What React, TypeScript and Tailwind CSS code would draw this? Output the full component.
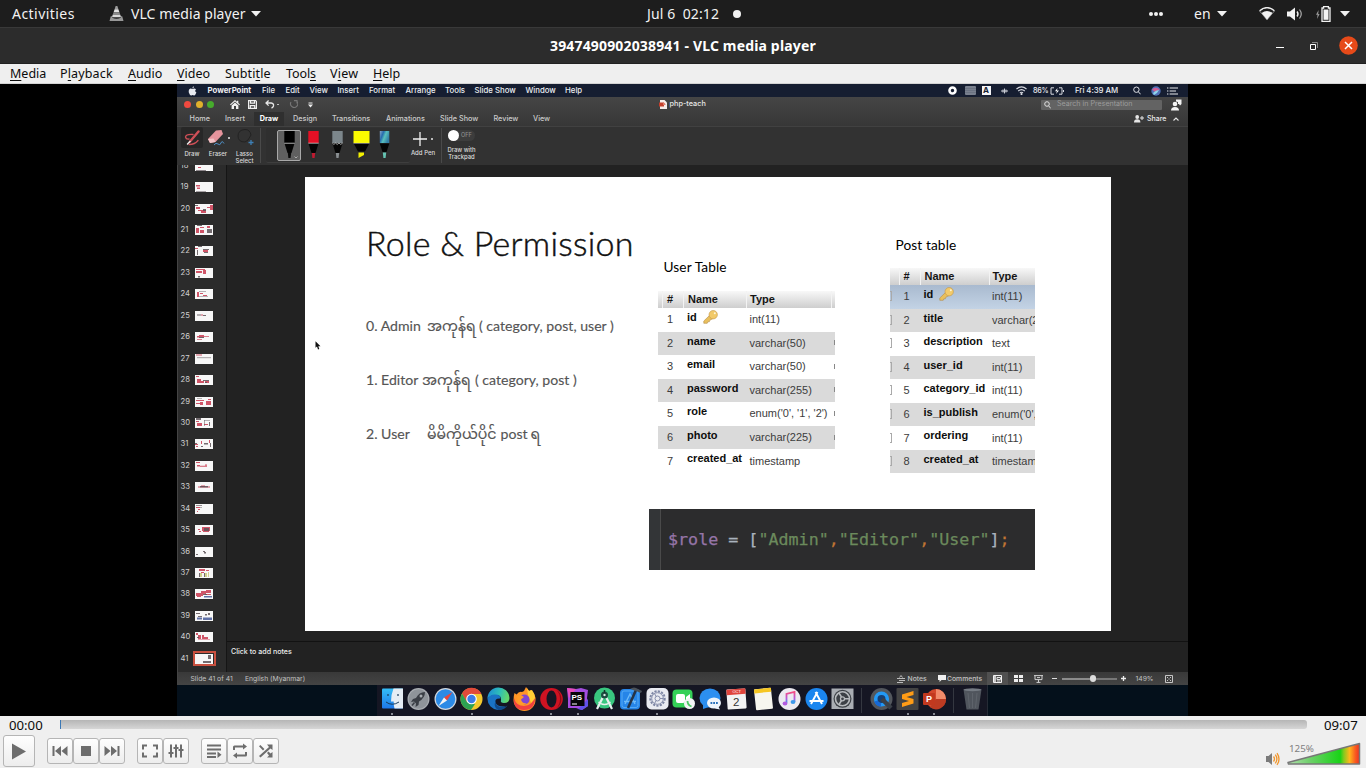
import React from "react";

type Kids = { children?: React.ReactNode };

const mono = "font-['DejaVu_Sans_Mono',monospace]";

function Caret({ className }: { className: string }) {
  return (
    <svg className={className} viewBox="0 0 10 6">
      <path d="M0 0h10L5 5.5z" fill="#f2f2f2" />
    </svg>
  );
}

function Slot({ w, children }: Kids & { w: string }) {
  return <div className={`${w} shrink-0 whitespace-nowrap flex items-center`}>{children}</div>;
}

/* ---------- desktop bar, title bar, menu ---------- */

function GnomeBar() {
  return (
    <div className="h-[28px] shrink-0 flex items-center bg-[#1d1d1d] border-b border-[#393939] text-[#f2f2f2] text-[14px] leading-[20px]">
      <Slot w="w-[109px] pl-[12px]"><span className="tracking-[0.45px]">Activities</span></Slot>
      <Slot w="w-[22px]">
        <svg className="w-[15px] h-[17px]" viewBox="0 0 15 17">
          <path d="M6.6 1h1.8l1 3.2H5.6z" fill="#9b9b9b" />
          <path d="M5.6 4.2h3.8l1 3H4.6z" fill="#e4e4e4" />
          <path d="M4.6 7.2h5.8l.9 2.5H3.7z" fill="#8b8b8b" />
          <path d="M3.7 9.7h7.6l.8 2.6H2.9z" fill="#dadada" />
          <path d="M1.8 11.3h1.5l-.3 1.5q4.500 2 9 0l-.3-1.500h1.500L14.500 16H.5z" fill="#989898" />
        </svg>
      </Slot>
      <Slot w="w-[120px]"><span className="tracking-[0.06px]">VLC media player</span></Slot>
      <Slot w="w-[396px]"><Caret className="w-[10px] h-[6px]" /></Slot>
      <Slot w="w-[86px]"><span className="whitespace-pre tracking-[0.1px]">Jul 6  02:12</span></Slot>
      <Slot w="w-[416px]"><i className="w-[8px] h-[8px] rounded-full bg-[#f2f2f2]" /></Slot>
      <Slot w="w-[45px] gap-[1px]">
        <i className="w-[4px] h-[4px] rounded-full bg-[#f2f2f2]" />
        <i className="w-[4px] h-[4px] rounded-full bg-[#f2f2f2]" />
        <i className="w-[4px] h-[4px] rounded-full bg-[#f2f2f2]" />
      </Slot>
      <Slot w="w-[23px]">en</Slot>
      <Slot w="w-[42px]"><Caret className="w-[10px] h-[6px]" /></Slot>
      <Slot w="w-[28px]">
        <svg className="w-[16px] h-[14px]" viewBox="0 0 16 14">
          <path d="M.6 4Q8-2.500 15.400 4L8 12.800z" fill="none" stroke="#8a8a8a" strokeWidth="1" />
          <path d="M.6 3.700Q8-2.500 15.400 3.700" fill="none" stroke="#eee" strokeWidth="1.300" />
          <path d="M2.600 6Q8 2 13.400 6L8 12.800z" fill="#f2f2f2" />
        </svg>
      </Slot>
      <Slot w="w-[29px]">
        <svg className="w-[16px] h-[14px]" viewBox="0 0 16 14" fill="none" stroke="#eee">
          <path d="M0 4.500h3L8 .5v13L3 9.500H0z" fill="#f2f2f2" stroke="none" />
          <path d="M10 4.500q2 2.500 0 5" strokeWidth="1.400" />
          <path d="M12.500 2.500q3.500 4.500 0 9" stroke="#aaa" strokeWidth="1.200" />
        </svg>
      </Slot>
      <Slot w="w-[24px]">
        <svg className="w-[15px] h-[16px]" viewBox="0 0 15 16">
          <path d="M2.600 4L0 8.800h1.600L1 13l2.600-5H2.200z" fill="#9a9a9a" />
          <path d="M7.600.600h4.800v1.400h1.600v13.300H6V2h1.600z" fill="none" stroke="#f2f2f2" strokeWidth="1.300" />
          <rect x="7.500" y="3.500" width="5" height="10.300" fill="#f2f2f2" />
        </svg>
      </Slot>
      <Caret className="w-[10px] h-[6px]" />
    </div>
  );
}

function TitleBar() {
  return (
    <div className="h-[36px] shrink-0 flex items-center bg-[#2c2c2c] border-b border-[#212121]">
      <div className="w-[550px]" />
      <Slot w="w-[726px]">
        <span className="text-white font-bold text-[14px] tracking-[0.16px] leading-[18px]">3947490902038941 - VLC media player</span>
      </Slot>
      <Slot w="w-[34px]"><i className="w-[8px] h-px bg-white mt-[4px]" /></Slot>
      <Slot w="w-[29px]">
        <svg className="w-[8px] h-[8px]" viewBox="0 0 8 8" fill="none">
          <path d="M2 .5h5.500V6" stroke="#888" />
          <path d="M.5 2.500h5v5h-5z" stroke="#fff" />
        </svg>
      </Slot>
      <svg className="w-[19px] h-[19px] -mt-[1px]" viewBox="0 0 19 19">
        <circle cx="9.500" cy="9.500" r="9.300" fill="#e64a19" />
        <path d="M6 6l7 7M13 6l-7 7" stroke="#fff" strokeWidth="1.500" />
      </svg>
    </div>
  );
}

const vlcMenu: [string, string, string, string][] = [
  ["w-[50px]", "", "M", "edia"],
  ["w-[68px] tracking-[0.15px]", "P", "l", "ayback"],
  ["w-[49px]", "", "A", "udio"],
  ["w-[48px]", "", "V", "ideo"],
  ["w-[61px] tracking-[0.1px]", "Subti", "t", "le"],
  ["w-[44px] -tracking-[0.1px]", "Tool", "s", ""],
  ["w-[43px] tracking-[0.2px]", "V", "i", "ew"],
  ["w-[40px]", "", "H", "elp"],
];

function VlcMenu() {
  return (
    <div className="h-[20px] shrink-0 flex items-center pl-[10px] bg-[#efefef] border-b border-[#d3d3d3] text-[#0b0b0b] text-[12.5px] leading-[18px]">
      {vlcMenu.map(([w, a, u, b]) => (
        <Slot key={a + u + b} w={w}>
          <span>{a}<span className="underline underline-offset-[2px] decoration-1">{u}</span>{b}</span>
        </Slot>
      ))}
    </div>
  );
}

/* ---------- macOS menu bar and PowerPoint chrome ---------- */

const macMenu: [string, string][] = [
  ["w-[54.500px] font-bold", "PowerPoint"],
  ["w-[23.500px]", "File"],
  ["w-[24px]", "Edit"],
  ["w-[28px]", "View"],
  ["w-[31.500px]", "Insert"],
  ["w-[36.500px]", "Format"],
  ["w-[39.500px]", "Arrange"],
  ["w-[29.500px]", "Tools"],
  ["w-[51px]", "Slide Show"],
  ["w-[39.500px]", "Window"],
  ["w-[382.500px]", "Help"],
];

function MacMenuBar() {
  return (
    <div className="h-[13px] shrink-0 flex items-center bg-[#161e31] text-[#eceef2] text-[7.8px] leading-[13px] font-medium">
      <Slot w="w-[30.500px] pl-[11px]">
        <svg className="w-[9px] h-[10px]" viewBox="0 0 9 10" fill="#e8eaf0">
          <path d="M6 .2Q4.200.6 4.400 2.400 6 2.200 6 .2zM4.500 2.900Q6.800 1.800 8 3.400 6.200 4.600 8.400 6.600 7.200 9.700 6 9.400 4.600 8.800 3.300 9.400 1.800 9.600.8 6.500.3 3.200 2.600 2.600z" />
        </svg>
      </Slot>
      {macMenu.map(([w, t]) => <Slot key={t} w={w}>{t}</Slot>)}
      <Slot w="w-[17px]">
        <svg className="w-[9px] h-[9px]" viewBox="0 0 9 9"><circle cx="4.500" cy="4.500" r="3" fill="none" stroke="#fff" strokeWidth="2.600" /></svg>
      </Slot>
      <Slot w="w-[17px]">
        <svg className="w-[11px] h-[9px]" viewBox="0 0 11 9"><rect width="11" height="9" rx="1" fill="#79808e" /><path d="M0 2.500h11M0 4.500h11M0 6.500h11" stroke="#626a7a" strokeWidth=".6" /></svg>
      </Slot>
      <Slot w="w-[19px]">
        <span className="w-[9px] h-[9px] bg-[#f4f4f6] text-[#161e31] font-bold text-[8px] leading-[9px] text-center">A</span>
      </Slot>
      <Slot w="w-[15px]">
        <svg className="w-[7px] h-[8px]" viewBox="0 0 7 8" stroke="#c9ccd4" strokeWidth="1"><path d="M0 4h7M2 2.500v3M5 2.500v3M3.500 1.500v5" /></svg>
      </Slot>
      <Slot w="w-[17.500px]">
        <svg className="w-[11px] h-[9px]" viewBox="0 0 11 9" fill="none" stroke="#d9dbe2" strokeWidth="1.100">
          <path d="M.5 3Q5.500-1.200 10.500 3M2.200 5Q5.500 2.200 8.800 5M3.900 6.900Q5.500 5.500 7.100 6.900" /><circle cx="5.500" cy="8" r=".5" />
        </svg>
      </Slot>
      <Slot w="w-[17px]"><span className="text-[7.2px] tracking-[-0.3px]">86%</span></Slot>
      <Slot w="w-[25px]">
        <svg className="w-[14px] h-[8px]" viewBox="0 0 14 8" fill="none" stroke="#d9dbe2"><path d="M4 .8H1v6.400h3M9 .8h3v6.400H9M13.500 3v2" /><path d="M7.500 1L5 4.300h2L6 7l3-3.600H7z" fill="#fff" stroke="none" /></svg>
      </Slot>
      <Slot w="w-[58px]"><span className="tracking-[-0.05px]">Fri 4:39 AM</span></Slot>
      <Slot w="w-[17.500px]">
        <svg className="w-[8px] h-[9px]" viewBox="0 0 8 9" fill="none" stroke="#dfe1e6"><circle cx="3.400" cy="3.700" r="2.700" /><path d="M5.400 5.800l2.200 2.500" /></svg>
      </Slot>
      <Slot w="w-[16px]">
        <svg className="w-[10px] h-[10px]" viewBox="0 0 10 10"><circle cx="5" cy="5" r="4.700" fill="#5271b8" /><path d="M1 3.500Q5 0 9 4 6 4 4 6z" fill="#cf5e96" /><path d="M2 7q3-3 6-3-2 4-5 5z" fill="#8fd6ea" /></svg>
      </Slot>
      <svg className="w-[11px] h-[8px]" viewBox="0 0 11 8" stroke="#e8e9ee" strokeWidth="1.200"><path d="M0 1h1.400M2.600 1H11M0 4h1.400M2.600 4H9M0 7h1.400M2.600 7H11" /></svg>
    </div>
  );
}

function WindowTitle() {
  return (
    <div className="h-[15px] flex items-center text-[#e6e6e6]">
      <Slot w="w-[53px] pl-[7px] gap-[4.500px]">
        <i className="w-[7px] h-[7px] rounded-full bg-[#f0493f]" />
        <i className="w-[7px] h-[7px] rounded-full bg-[#e0b02c]" />
        <i className="w-[7px] h-[7px] rounded-full bg-[#46ab2c]" />
      </Slot>
      <Slot w="w-[18px]">
        <svg className="w-[10px] h-[9px]" viewBox="0 0 10 9" fill="#f0f0f0"><path d="M5 0L0 4.500l.8.8L5 1.600l4.200 3.700.8-.8-1.700-1.500V.8H7v1z" /><path d="M1.600 5.400L5 2.400l3.400 3V9H6V6H4v3H1.600z" /></svg>
      </Slot>
      <Slot w="w-[17px]">
        <svg className="w-[9px] h-[9px]" viewBox="0 0 9 9" fill="none" stroke="#f0f0f0" strokeWidth="1.200"><path d="M.6.600h7l.8.8v7H.6zM2.500.600v2.600h4V.600M2.300 8.400V5.600h4.400v2.800" /></svg>
      </Slot>
      <Slot w="w-[12px]">
        <svg className="w-[10px] h-[9px]" viewBox="0 0 10 9" fill="none" stroke="#e8e8e8" strokeWidth="1.300"><path d="M3.600.500L1 3l2.600 2.600M1.200 3h5Q9 3.500 8.500 6 8 7.500 6.500 8.200" /></svg>
      </Slot>
      <Slot w="w-[12px]"><i className="w-[2px] h-[1.500px] bg-[#bbb]" /></Slot>
      <Slot w="w-[19px]">
        <svg className="w-[9px] h-[9px]" viewBox="0 0 9 9" fill="none" stroke="#777" strokeWidth="1.100"><path d="M5 .6h3v3M7.700 1.200A3.600 3.600 0 1 1 2 2" /></svg>
      </Slot>
      <Slot w="w-[350.500px]">
        <svg className="w-[5px] h-[6px]" viewBox="0 0 5 6" fill="#eee"><path d="M.5.500h4v1h-4zM0 2.500h5L2.500 5.500z" /></svg>
      </Slot>
      <Slot w="w-[11px]">
        <svg className="w-[8px] h-[9px]" viewBox="0 0 8 9"><path d="M1 0h4.500L8 2.500V9H1z" fill="#f5ecea" /><path d="M0 2.500h5v4H0z" fill="#c5402d" /><path d="M4 2.500a2.500 2.500 0 0 1 2.500 2.500H4z" fill="#e07b69" /></svg>
      </Slot>
      <Slot w="w-[371.500px]"><span className="text-[7.300px] font-medium">php-teach</span></Slot>
      <div className="w-[120.500px] h-[10px] shrink-0 rounded-[1px] bg-[#636363] flex items-center pl-[3px] gap-[6px] whitespace-nowrap">
        <svg className="w-[7px] h-[8px]" viewBox="0 0 7 8" fill="none" stroke="#e0e0e0"><circle cx="3" cy="3" r="2.300" /><path d="M4.700 4.900L6.700 7.400" /></svg>
        <span className="text-[7.100px] text-[#9c9c9c]">Search in Presentation</span>
      </div>
      <svg className="w-[11px] h-[12px] ml-[9px]" viewBox="0 0 11 12" fill="#f4f4f4"><circle cx="4" cy="5" r="2.300" /><path d="M0 11.500q0-3.500 4-3.500t4 3.500zM5 .5h5.500V5L9 6.500 8 5H7V3L5 2.500z" /></svg>
    </div>
  );
}

const tabsAfter: [string, string][] = [
  ["w-[39px]", "Design"],
  ["w-[54px]", "Transitions"],
  ["w-[54px]", "Animations"],
  ["w-[53.500px]", "Slide Show"],
  ["w-[39.500px]", "Review"],
  ["w-[601px]", "View"],
];

function Tabs() {
  return (
    <div className="h-[14px] flex items-center text-[#cbcbcb] text-[7.250px] leading-[14px] font-medium">
      <Slot w="w-[48px] pl-[12.500px]">Home</Slot>
      <Slot w="w-[29px]">Insert</Slot>
      <div className="w-[30px] h-full mr-[9px] shrink-0 bg-[#2f2f2f] text-white font-bold flex items-center justify-center">Draw</div>
      {tabsAfter.map(([w, t]) => <Slot key={t} w={w}>{t}</Slot>)}
      <Slot w="w-[13px]">
        <svg className="w-[10px] h-[8px]" viewBox="0 0 10 8" fill="#e6e6e6"><circle cx="3.200" cy="2" r="1.900" /><path d="M0 7.500Q0 4.300 3.200 4.300T6.400 7.500zM7.500 1h1v1.500H10v1H8.500V5h-1V3.500H6v-1h1.500z" /></svg>
      </Slot>
      <Slot w="w-[26px]"><span className="text-[7px] text-[#ececec]">Share</span></Slot>
      <svg className="w-[6px] h-[4px]" viewBox="0 0 6 4" fill="none" stroke="#e6e6e6" strokeWidth="1.100"><path d="M.5 3.500L3 1l2.500 2.500" /></svg>
    </div>
  );
}

function Pen({ cap, tip, wide, zig }: { cap: string; tip: string; wide?: boolean; zig?: boolean }) {
  return wide ? (
    <svg className="w-[17px] h-[28px]" viewBox="0 0 17 28">
      <path d="M.5 0h16v12H.5z" fill={cap} /><path d="M.8 12.500h15.400l-4.200 8H5z" fill="#050505" /><path d="M5.500 21.500H11V24l-5.500 3z" fill={tip} /><path d="M.5 12.300h16" stroke="#ddd" strokeWidth=".5" />
    </svg>
  ) : (
    <svg className="w-[11px] h-[28px]" viewBox="0 0 11 28">
      <path d="M.3 0h10.400v12H.3z" fill={cap} /><path d="M.5 12.500h10L7.500 22h-4z" fill="#050505" /><path d="M3.800 22h3.400l-.6 5H4.400z" fill={tip} />
      <path d={zig ? "M.3 12l1.600 1.500L3.500 12l1.700 1.500L7 12l1.700 1.500L10.700 12" : "M.3 12.200h10.400"} stroke="#d8d8d8" strokeWidth=".7" fill="none" />
    </svg>
  );
}

function Ribbon() {
  return (
    <div className="h-[39px] shrink-0 flex bg-[#323232] border-t border-[#414141] text-[#dcdcdc] text-[6px] leading-[7px] font-medium">
      <div className="w-[22px] ml-[4px] flex flex-col items-center shrink-0">
        <div className="w-[22px] h-[21px] rounded-[2px] bg-[#272727] flex items-center justify-center">
          <svg className="w-[17px] h-[16px]" viewBox="0 0 17 16" fill="none" stroke="#cf4f57" strokeLinecap="round"><path d="M14.500 1.500L6 11.500" strokeWidth="2.400" /><path d="M6 11.500L3.500 14" stroke="#eee" strokeWidth="1.400" /><path d="M9 4.500Q2 4 1.500 7 2 9.500 5 9M5 14.500q6 0 9-4" strokeWidth="1.300" /></svg>
        </div>
        <span className="mt-[1.500px]">Draw</span>
      </div>
      <div className="w-[27px] ml-[1.500px] mt-[1px] flex flex-col items-center shrink-0">
        <div className="flex items-center gap-[2px] h-[20px]">
          <svg className="w-[19px] h-[18px]" viewBox="0 0 19 18"><path d="M9 1.500L14.500 1l1.500 4L8.500 13 3 14l-2-4z" fill="#e6949c" /><path d="M1 10l5.500-.500L8.500 13 3 14z" fill="#f3c4c6" /><path d="M7 16q2-3 4-1t3-1 3 .500" stroke="#4f8fc5" fill="none" /></svg>
          <i className="w-[2px] h-[2px] bg-[#bbb]" />
        </div>
        <span className="mt-[1.500px]">Eraser</span>
      </div>
      <div className="w-[24px] ml-[1px] mr-[1px] mt-[1px] flex flex-col items-center text-center shrink-0">
        <svg className="w-[18px] h-[20px] shrink-0" viewBox="0 0 18 20" fill="none"><path d="M9 1.500Q2 2 2 8t7 6l3-2 3-5Q14 1.500 9 1.500z" stroke="#222" strokeWidth="1" /><path d="M15 12v5M12.500 14.500h5" stroke="#3d7fb5" strokeWidth="1.300" /></svg>
        <span className="mt-[1.500px]">Lasso Select</span>
      </div>
      <i className="w-px h-[35px] ml-[2.500px] mt-[1px] bg-[#4a4a4a] shrink-0" />
      <div className="w-[144px] h-[35px] ml-[5px] mt-[1px] rounded-[2px] bg-[#2f2f2f] border-b border-[#3e3e3e] flex items-start shrink-0">
        <div className="w-[24px] h-[31px] ml-[11px] mt-[2px] rounded-[2px] bg-[#606060] border border-[#a9a9a9] flex justify-center shrink-0 relative">
          <Pen cap="#000" tip="#0a0a0a" />
          <svg className="absolute right-[2px] bottom-[1px] w-[4px] h-[3px]" viewBox="0 0 4 3"><path d="M.5.500L2 2 3.500.500" stroke="#ccc" strokeWidth=".7" fill="none" /></svg>
        </div>
        <div className="flex pt-[3px] pl-[6.500px]">
          <Slot w="w-[24px]"><Pen cap="#e51025" tip="#c01a30" /></Slot>
          <Slot w="w-[21px]"><Pen cap="#7c868b" tip="#8a8f92" zig /></Slot>
          <Slot w="w-[26px]"><Pen cap="#fbfb00" tip="#f3f000" wide /></Slot>
          <Slot w="w-[12px]">
            <svg className="w-[11px] h-[28px]" viewBox="0 0 11 28">
              <defs><linearGradient id="galaxy" x1="0" x2="1" y2=".5"><stop offset="0" stopColor="#8ea7c9" /><stop offset=".35" stopColor="#266cae" /><stop offset=".6" stopColor="#59c0bd" /><stop offset="1" stopColor="#327fa6" /></linearGradient></defs>
              <path d="M.8 0h9.500v12H.8z" fill="url(#galaxy)" /><path d="M.8 12.500h9.500L7.500 21h-4z" fill="#050505" /><path d="M3.800 21.500h3.400l-.6 5.500H4.400z" fill="#66c4b3" />
            </svg>
          </Slot>
        </div>
      </div>
      <div className="w-[26px] ml-[0px] mr-[1px] mt-[3px] flex flex-col items-center shrink-0">
        <div className="flex items-center gap-[4px] h-[17px]">
          <svg className="w-[14px] h-[14px]" viewBox="0 0 14 14"><path d="M7 0v14M0 7h14" stroke="#f2f2f2" strokeWidth="1.300" /></svg>
          <i className="w-[2px] h-[2px] bg-[#bbb]" />
        </div>
        <span className="mt-[2px] whitespace-nowrap text-[6px]">Add Pen</span>
      </div>
      <i className="w-px h-[35px] ml-[4px] mt-[1px] bg-[#4a4a4a] shrink-0" />
      <div className="ml-[6px] mt-[3px] w-[27px] flex flex-col items-center text-center text-[5.900px] shrink-0">
        <div className="w-[27px] h-[11px] rounded-full bg-[#3d3d3d] flex items-center gap-[2px] shrink-0">
          <i className="w-[11px] h-[11px] rounded-full bg-white" />
          <span className="text-[5.500px] text-[#8e8e8e]">OFF</span>
        </div>
        <span className="mt-[5px] whitespace-nowrap">Draw with<br />Trackpad</span>
      </div>
    </div>
  );
}

/* ---------- slide thumbnails ---------- */

const thumbs: { n: number; r: string; d?: string; b?: string; y?: string }[] = [
  { n: 18, r: "M1 1h5v1H1zM1 3h3v1H1zM3 6h3v1H3z", d: "M1 9h10v.8H1z" },
  { n: 19, r: "M1 3h4v1.500H1zM2 5.500h3V7H2z", d: "M1 9h10v.6H1z" },
  { n: 20, r: "M1 3h4v2H1zM6 6h5v3H6zM12 3h3v1h-3zM15 1h3v5h-3zM3 6h3v1H3z", d: "M0 1h3v1H0zM8 5h3v2H8z" },
  { n: 21, r: "M1 3h3v5H1zM5 5h4v3H5zM12 1h3v2h-3zM5 2h4v1H5z", d: "M12 4h5v4h-5zM2 0h5v1H2z" },
  { n: 22, r: "M0 2h3v1H0zM8 4h5v2H8z", d: "M3 0h4v1H3zM8 3h6v1H8zM2 4h1v5H2zM9 6h4v1H9z" },
  { n: 23, r: "M1 1h9v1H1zM1 3h6v2H1zM8 2h3v4H8z", d: "M3 8h2v1.500H3z" },
  { n: 24, r: "M2 3h2v5H2zM5 4h3v1H5zM8 6h4v1H8z", d: "M4 2h7v.6H4zM4 7h9v.6H4z" },
  { n: 25, r: "M6 3.500h2v1H6z", d: "M2 3.500h4v1H2zM8 4h3v1H8z" },
  { n: 26, r: "M2 4h7v1.500H2zM4 3h5v1H4zM2 7h5v.8H2zM9 4h5v.8H9z", d: "M4 5h5v1H4z" },
  { n: 27, r: "M1 .500h6v1H1z", d: "M2 3.500h14v.6H2z" },
  { n: 28, r: "M2 4h4v4H2zM6 6h3v2H6zM1 1h3v1H1zM10 6h4v2h-4z", d: "M8 5h6v1H8zM10 7h2v1h-2z" },
  { n: 29, r: "M1 3h8v1H1zM1 6h4v1H1zM5 5h3v3H5zM11 4h5v4h-5zM13 2h3v1h-3z", d: "M2 1h5v.5H2z" },
  { n: 30, r: "M1 3h3v1H1zM2 5h5v3H2zM9 6h4v1H9z", d: "M1 0h5v2H1zM9 2h6v.6H9zM9 2h.6v6H9zM14 4h1v4h-1z" },
  { n: 31, r: "M0 5h3v1H0zM6 2h1v3H6zM14 1h1v3h-1zM1 7h2v1H1z", d: "M0 4h2v1H0zM9 4h4v1.500H9zM6 7h2v1H6zM15 4h1v4h-1z" },
  { n: 32, r: "M1 1h4v1H1zM2 4h3v1.500H2zM5 4.800h7v1H5zM10 3.500h2v1h-2z" },
  { n: 33, r: "M3 4.500h12v1H3zM6 3.500h4v1H6z", d: "M5 4h8v1.400H5z" },
  { n: 34, r: "M1 3h4v1H1zM3 5h2v1H3zM2 7h1v1H2z", d: "M1 1h6v.8H1zM5 3h2v.6H5z" },
  { n: 35, r: "M3 4h2v1H3zM4 6h2v1H4zM7 2h8v4H7zM8 6h6v1H8z", d: "M9 3h5v3H9z" },
  { n: 36, r: "", d: "M8 4h2v1H8zM9 5h2v1.500H9zM1 7h2v1H1z" },
  { n: 37, r: "M4 1h6v2H4zM11 2h3v1h-3zM6 4h3v1H6z", d: "M4 5h1v4H4zM9 5h1v4H9z", y: "M5 5h2v4H5zM10 5h2v4h-2zM13 4h1v5h-1z" },
  { n: 38, r: "M1 4h7v3H1zM6 2h5v3H6zM11 1h5v3h-5zM2 7h4v1H2zM10 5h6v1h-6z", d: "M8 5h4v1H8z", b: "M9 7h8v1.500H9z" },
  { n: 39, r: "", d: "M1 2h4v1H1zM10 3h2v1.500h-2zM13 2h2v2h-2zM3 5h4v1H3z", b: "M2 6.500h5v2H2zM8 6.500h9V9H8z" },
  { n: 40, r: "M1 1h2v2H1zM3 3h3v4H3zM7 3h2v4H7zM9 5h4v2H9zM3 7.500h12v.6H3z", d: "M2 5h2v1H2z" },
  { n: 41, r: "", d: "M8 7h8v2H8zM13 1h3v4h-3z" },
];

function Thumbs() {
  return (
    <div className="w-[50px] shrink-0 overflow-hidden bg-[#2b2b2b] border-r border-[#151515] border-l border-l-[#444]">
      <div className="flex flex-col -mt-[10px]">
        {thumbs.map((t) => (
          <div key={t.n} className="h-[21.450px] shrink-0 flex items-center">
            <span className="w-[14.500px] pl-[2.500px] text-[7.700px] leading-[10px] text-[#cfcfcf]">{t.n}</span>
            <div className={t.n === 41 ? "w-[23px] h-[15px] border-2 border-[#c9503f] flex items-center justify-center" : "w-[20px] h-[12px] ml-[1.500px] flex items-center justify-center"}>
              <svg className="w-[18px] h-[10px] shrink-0" viewBox="0 0 18 10">
                <rect width="18" height="10" fill="#f7f7f7" />
                <path d={t.r} fill="#cf5568" />
                {t.d && <path d={t.d} fill="#5d5358" opacity=".85" />}
                {t.b && <path d={t.b} fill="#6172a8" />}
                {t.y && <path d={t.y} fill="#cfd08c" />}
              </svg>
            </div>
          </div>
        ))}
      </div>
    </div>
  );
}

/* ---------- slide ---------- */

const userRows: [string, string][] = [
  ["id", "int(11)"],
  ["name", "varchar(50)"],
  ["email", "varchar(50)"],
  ["password", "varchar(255)"],
  ["role", "enum('0', '1', '2')"],
  ["photo", "varchar(225)"],
  ["created_at", "timestamp"],
];

const postRows: [string, string][] = [
  ["id", "int(11)"],
  ["title", "varchar(255)"],
  ["description", "text"],
  ["user_id", "int(11)"],
  ["category_id", "int(11)"],
  ["is_publish", "enum('0', '1')"],
  ["ordering", "int(11)"],
  ["created_at", "timestamp"],
];

function Key() {
  return (
    <svg className="w-[15px] h-[14px] ml-[6px]" viewBox="0 0 15 14">
      <path d="M7 5L.8 11v2.300h3.400l.6-1.500h1.500l.5-1.500L10 8.500z" fill="#e9bf5c" stroke="#b58d48" strokeWidth=".6" />
      <circle cx="10.200" cy="4.700" r="4.200" fill="#f2ca6a" stroke="#c3954a" strokeWidth=".6" />
      <circle cx="11.800" cy="3.200" r="1" fill="#fff5d8" />
    </svg>
  );
}

function DbTable({ rows, post }: { rows: [string, string][]; post?: boolean }) {
  const first = post ? "w-[9.500px]" : "w-[5px]";
  return (
    <div className={`${post ? "w-[145px]" : "w-[177px]"} overflow-hidden font-['Liberation_Sans',sans-serif] text-[11px] leading-[14px] text-[#3c3c3c] whitespace-nowrap`}>
      <div className="h-[17px] flex items-stretch bg-linear-to-b from-[#f8f8f8] to-[#cecece] text-[#151515] font-bold">
        <div className={`${first} shrink-0 border-r border-[#f3f3f3]`} />
        <div className="w-[21px] shrink-0 border-r border-[#f3f3f3] pl-[4px] pt-[1px]">#</div>
        <div className={`${post ? "w-[69px]" : "w-[63px]"} shrink-0 border-r border-[#f3f3f3] pl-[4px] pt-[1px]`}>Name</div>
        <div className={`${post ? "w-[60px]" : "w-[85px]"} shrink-0 border-r border-[#f3f3f3] pl-[3px] pt-[1px]`}>Type</div>
      </div>
      {rows.map(([name, type], i) => (
        <div
          key={name}
          className={`h-[23.550px] pb-[1px] flex items-center ${i === 0 && post ? "bg-linear-to-b from-[#a9bacf] to-[#c3d3e5]" : i % 2 ? "bg-[#dadada]" : "bg-white"}`}
        >
          <div className={`${first} shrink-0`}>
            {post && <i className="block w-[1.500px] h-[10px] border-y border-r border-[#aaa]" />}
          </div>
          <div className="w-[24px] shrink-0 pl-[4px]">{i + 1}</div>
          <div className={`${post ? "w-[68.500px]" : "w-[62.500px]"} shrink-0 flex items-center h-[14px] -mt-[4.500px] font-bold text-[#0d0d0d]`}>
            {name}
            {name === "id" && <Key />}
          </div>
          <div className={post ? "" : "w-[84.500px]"}>{type}</div>
          {!post && i > 0 && i < 6 && <i className="w-px h-[5px] bg-[#888]" />}
        </div>
      ))}
    </div>
  );
}

function CodeBlock() {
  return (
    <div className={`w-[386px] h-[61px] bg-[#2c2c2d] flex items-center ${mono} text-[16.700px] leading-[20px] whitespace-pre [-webkit-text-stroke:0.25px]`}>
      <div className="w-[12px] h-full bg-[#333537] border-r border-[#4a4a4a] shrink-0" />
      <div className="pl-[7px]">
        <span className="text-[#9675a8]">$role</span>
        <span className="text-[#a9b3bd]"> = [</span>
        <span className="text-[#6b8a5c]">"Admin"</span><span className="text-[#c07634]">,</span>
        <span className="text-[#6b8a5c]">"Editor"</span><span className="text-[#c07634]">,</span>
        <span className="text-[#6b8a5c]">"User"</span>
        <span className="text-[#a9b3bd]">]</span><span className="text-[#c07634]">;</span>
      </div>
    </div>
  );
}

const burmese = "font-['Noto_Sans_Myanmar','Padauk','Lato',sans-serif] mt-[1.500px]";

function Slide() {
  return (
    <div className="relative w-[806px] h-[454px] bg-white font-['Lato',sans-serif] whitespace-nowrap">
      <div className="absolute left-[61px] top-[44px] text-[34px] leading-[44px] tracking-[0.25px] font-light text-[#111] [-webkit-text-stroke:0.45px]">Role &amp; Permission</div>
      <div className="absolute left-[61px] top-[139px] text-[14.100px] leading-[20px] text-[#555] [-webkit-text-stroke:0.15px] flex">
        <span className="w-[61px]">0. Admin</span>
        <span className={`w-[52px] ${burmese}`}>အကုန်ရ</span>
        <span>( category, post, user )</span>
      </div>
      <div className="absolute left-[61px] top-[193px] text-[14.100px] leading-[20px] text-[#555] [-webkit-text-stroke:0.15px] flex">
        <span className="w-[56px]">1. Editor</span>
        <span className={`w-[53px] ${burmese}`}>အကုန်ရ</span>
        <span>( category, post )</span>
      </div>
      <div className="absolute left-[61px] top-[247px] text-[14.100px] leading-[20px] text-[#555] [-webkit-text-stroke:0.15px] flex">
        <span className="w-[61px]">2. User</span>
        <span className={`w-[73.500px] ${burmese}`}>မိမိကိုယ်ပိုင်</span>
        <span className="w-[30px]">post</span>
        <span className={burmese}>ရ</span>
      </div>
      <div className="absolute left-[358.500px] top-[80px] text-[13.700px] leading-[20px] tracking-[0.1px] text-black">User Table</div>
      <div className="absolute left-[590.500px] top-[58px] text-[13.700px] leading-[20px] tracking-[0.1px] text-black">Post table</div>
      <div className="absolute left-[353px] top-[114px]"><DbTable rows={userRows} /></div>
      <div className="absolute left-[585px] top-[91px]"><DbTable rows={postRows} post /></div>
      <div className="absolute left-[344px] top-[331.500px]"><CodeBlock /></div>
      <svg className="absolute left-[10px] top-[164px] w-[6px] h-[9px]" viewBox="0 0 6 9"><path d="M.5.300v6.500l1.500-1.200 1 2.800 1.300-.500-1-2.700h2.200z" fill="#111" /></svg>
    </div>
  );
}

function StatusBar() {
  return (
    <div className="h-[13px] shrink-0 flex items-center bg-linear-to-b from-[#393939] to-[#444] border-l border-[#444] text-[#c2c2c2] text-[6.800px] leading-[12px]">
      <Slot w="w-[54px] pl-[12.500px]">Slide 41 of 41</Slot>
      <Slot w="w-[665px] pl-[13px]">English (Myanmar)</Slot>
      <Slot w="w-[10.500px]">
        <svg className="w-[8px] h-[8px]" viewBox="0 0 8 8" stroke="#bbb"><path d="M2.500 2.500L4 .500l1.500 2M0 3.500h8M2 5.500h6M0 7.500h6" fill="none" /></svg>
      </Slot>
      <Slot w="w-[30px]"><span className="font-medium">Notes</span></Slot>
      <Slot w="w-[9.500px]">
        <svg className="w-[8px] h-[7px]" viewBox="0 0 8 7" fill="#f0f0f0"><path d="M0 0h8v5H3.500L1.500 7V5H0z" /></svg>
      </Slot>
      <Slot w="w-[40px]"><span className="font-medium">Comments</span></Slot>
      <div className="w-[21px] h-full shrink-0 bg-[#505050] flex items-center justify-center">
        <svg className="w-[9px] h-[8px]" viewBox="0 0 9 8" fill="none" stroke="#f2f2f2"><path d="M.5.500h8v7h-8z" /><path d="M2 0v8" strokeWidth="1.500" /><path d="M4 2.500h3.500v2H4zM4 6h3.500" strokeWidth=".9" /></svg>
      </div>
      <Slot w="w-[20px] justify-center">
        <svg className="w-[9px] h-[7px]" viewBox="0 0 9 7" fill="#eee"><path d="M0 0h4v3H0zM5 0h4v3H5zM0 4h4v3H0zM5 4h4v3H5z" /></svg>
      </Slot>
      <Slot w="w-[20px] justify-center">
        <svg className="w-[9px] h-[8px]" viewBox="0 0 9 8" fill="none" stroke="#d0d0d0"><path d="M0 .600h9M1 .600v4h7v-4M4.500 4.600v2.800M2.500 7.400h4M3 2.600h3" /></svg>
      </Slot>
      <Slot w="w-[13.500px] justify-center"><i className="w-[5px] h-[1.500px] bg-[#ddd]" /></Slot>
      <Slot w="w-[55.500px]">
        <i className="h-[2px] w-[28px] bg-[#8c8c8c]" /><i className="w-[6.500px] h-[6.500px] rounded-full bg-[#ddd]" /><i className="h-[2px] flex-1 bg-[#777]" />
      </Slot>
      <Slot w="w-[18.500px] pl-[4px]">
        <svg className="w-[5px] h-[5px]" viewBox="0 0 5 5"><path d="M2.500 0v5M0 2.500h5" stroke="#eee" strokeWidth="1.300" /></svg>
      </Slot>
      <Slot w="w-[29px]">149%</Slot>
      <svg className="w-[8px] h-[8px]" viewBox="0 0 8 8" fill="none" stroke="#d5d5d5" strokeWidth=".9"><path d="M.5.500h7v7h-7zM2 2l1.300 1.300M6 2L4.700 3.300M2 6l1.300-1.300M6 6L4.700 4.700" /></svg>
    </div>
  );
}

/* ---------- dock ---------- */

function Ico({ children, dot }: Kids & { dot?: boolean }) {
  return (
    <div className="w-[26.500px] shrink-0 flex flex-col items-center">
      <svg className="w-[23px] h-[24px]" viewBox="0 0 23 24">{children}</svg>
      <i className={dot ? "w-[2px] h-[2px] mt-[1.500px] rounded-full bg-[#aeb2b8]" : "w-[2px] h-[2px] mt-[1.500px]"} />
    </div>
  );
}

function Dock() {
  return (
    <div className="h-[31px] flex-1 bg-[#04101b] flex">
      <div className="ml-[200px] w-[611px] h-full pl-[1.800px] pt-[2px] flex bg-[#151623] border-r border-[#252b35] shrink-0">
        <Ico dot>
          <defs><linearGradient id="finder" y2="1" x2="0"><stop stopColor="#34bdf6" /><stop offset="1" stopColor="#1d77e9" /></linearGradient></defs>
          <rect x="1" y="1.500" width="21" height="20" rx="1" fill="url(#finder)" />
          <path d="M12.500 1.500H22v20h-8.500q-1-4-.8-7H10q0-7 2.500-13z" fill="#e6edf4" />
          <path d="M5 15q6 4.500 13 0" stroke="#173a5c" fill="none" /><path d="M7 7v2M17 7v2" stroke="#173a5c" strokeWidth="1.200" />
        </Ico>
        <Ico>
          <circle cx="11.500" cy="12" r="11" fill="#a9adb2" /><circle cx="11.500" cy="12" r="9.800" fill="#8f949a" />
          <path d="M18 5q-6 0-9 6L6 12l-2 3 3-.5 2 2-.5 3.500 3-2 .5-3.500Q18 11 18 5z" fill="#3a3e45" /><circle cx="14" cy="9" r="1.500" fill="#a8adb2" /><path d="M7.500 15.500L5 18.500" stroke="#3a3e45" strokeWidth="1.500" />
        </Ico>
        <Ico>
          <circle cx="11.500" cy="12" r="11" fill="#d2d8df" /><circle cx="11.500" cy="12" r="9.800" fill="#2b8ae6" />
          <path d="M18.500 5L10 10.500l3 3z" fill="#e8463c" /><path d="M4.500 19L10 10.500l3 3z" fill="#f3f3f3" />
        </Ico>
        <Ico dot>
          <circle cx="11.500" cy="12" r="11" fill="#f3c82e" />
          <path d="M2 6.500A11 11 0 0 1 21.500 7H11.500l-5 8z" fill="#e14a3a" /><path d="M2 6.500l5 8.500 8 2-4 6A11 11 0 0 1 2 6.500z" fill="#2da352" />
          <circle cx="11.500" cy="12" r="5.300" fill="#fff" /><circle cx="11.500" cy="12" r="4.200" fill="#3c7de8" />
        </Ico>
        <Ico>
          <defs><linearGradient id="edge" x2="1" y2=".2"><stop stopColor="#1a87d8" /><stop offset=".6" stopColor="#2fbfb7" /><stop offset="1" stopColor="#62d66d" /></linearGradient></defs>
          <path d="M.5 12A11 11 0 0 1 22.500 11Q22.500 16 17 16q-4 0-3-3 .500-5-5-5-6 0-8.500 4z" fill="url(#edge)" />
          <path d="M.5 12Q3 7 8.500 7.500q5 0 5 4-6-.5-5 4Q10 20 18 19.500q-3 3.500-7 3.500A11 11 0 0 1 .5 12z" fill="#1a73c5" />
          <path d="M8.500 14q-.500 5.500 6.500 6 3.500 0 5.500-1.500Q17 23.500 11 23q-5-3-2.500-9z" fill="#114a8c" />
        </Ico>
        <Ico>
          <path d="M1.500 6l2 1.500Q6 4 9 5l2-1 2-4 3 4 2-1q5 5 4.500 10A11 11 0 0 1 .5 13Q.5 9 1.500 6z" fill="#ff9526" />
          <path d="M1 11q2 8 10 8 8-1 11-8 0 12-11 12T1 11z" fill="#f0413f" />
          <path d="M14 1l2 3 3-1q3 4 3 8l-4 5-3-8z" fill="#ffcf35" />
          <circle cx="11.500" cy="12.500" r="5" fill="#8046d1" /><path d="M4 9q4-2 7 1l-3 2.500Q9 17 14 16q-5 4-9 0z" fill="#ff9c28" />
        </Ico>
        <Ico dot>
          <ellipse cx="11.500" cy="12" rx="11.300" ry="11" fill="#cf1322" /><path d="M16 2.500A11 11 0 0 1 16 21.500Q20 18 20 12T16 2.500z" fill="#8d0b17" /><ellipse cx="11.500" cy="12" rx="5" ry="8.500" fill="#171624" />
        </Ico>
        <Ico dot>
          <path d="M1 1l9 1 5-1 7 2-1 8 1 8-6 4-6-2-8 0V12z" fill="#a54de0" /><path d="M1 1l9 1-7 9z" fill="#e84bb9" /><path d="M12 22l10-10v7l-6 4z" fill="#6152e8" />
          <rect x="4.500" y="5" width="14" height="14" fill="#060606" /><text x="5.500" y="13" fontSize="8" fontWeight="bold" fill="#fff" fontFamily="Liberation Sans">PS</text><path d="M6 17h5" stroke="#fff" />
        </Ico>
        <Ico>
          <circle cx="11.500" cy="11" r="10.500" fill="#39c77f" /><path d="M11 8L4 22M12 8l7 14" stroke="#e7f1ee" strokeWidth="2.200" /><path d="M5.500 15q6 5 12 0" stroke="#e7f1ee" strokeWidth="1.500" fill="none" /><circle cx="11.500" cy="8" r="3.500" fill="#1d4d41" /><path d="M11.500 3v7" stroke="#12352c" strokeWidth="1.500" /><circle cx="11.500" cy="8" r="1.200" fill="#d8eee6" />
        </Ico>
        <Ico>
          <rect x="1" y="2" width="20" height="20.500" rx="4" fill="#2685e8" /><rect x="3" y="4" width="16" height="16.500" rx="2" fill="none" stroke="#5fb2f7" strokeWidth=".8" /><path d="M6 17L11 7l5 10M5 14.500h12" stroke="#6dbaf8" fill="none" strokeWidth="1.300" /><path d="M17 3L9 21" stroke="#253447" strokeWidth="2.600" /><path d="M11 2q4-3 8 0l4 2-1 2-5-2z" fill="#4b535b" />
        </Ico>
        <Ico dot>
          <rect x=".5" y="1" width="22" height="21.500" rx="5" fill="#e9ebf1" /><circle cx="11.500" cy="11.500" r="7.200" fill="none" stroke="#7d86a4" strokeWidth="2" strokeDasharray="2.200 1.200" /><circle cx="11.500" cy="11.500" r="5.800" fill="none" stroke="#858dab" /><circle cx="11.500" cy="11.500" r="2.500" fill="none" stroke="#858dab" /><path d="M14 11.500h3.500M10.200 9.500L8.500 6.500M10.200 13.500l-1.700 3" stroke="#858dab" />
        </Ico>
        <Ico>
          <rect x=".5" y="2.500" width="20" height="18" rx="4" fill="#34d157" /><rect x="4" y="7" width="9" height="9" rx="2" fill="#fff" /><path d="M14 10l4-3v8l-4-3z" fill="#fff" /><circle cx="17.500" cy="16.500" r="5.500" fill="#f3f5f4" /><path d="M15.500 14q0 4 4 5.500" stroke="#48c862" strokeWidth="1.800" fill="none" />
        </Ico>
        <Ico>
          <ellipse cx="11" cy="11" rx="10.500" ry="9.500" fill="#2c8ff0" /><path d="M4 16v6l6-2z" fill="#2c8ff0" /><ellipse cx="15" cy="16" rx="7" ry="5.500" fill="#edf4fb" /><path d="M19 19l2 3.500-5-1z" fill="#edf4fb" /><path d="M11.500 16h1.800M14.200 16H16M17 16h1.800" stroke="#276fb9" strokeWidth="1.800" />
        </Ico>
        <Ico>
          <g transform="rotate(-4 11.500 12)"><rect x="2" y="2" width="19" height="20" rx="1" fill="#f3f3f3" /><path d="M2 2h19v5.500H2z" fill="#e0443d" /></g><text x="7.500" y="5.700" fontSize="4" fill="#fff" fontFamily="Liberation Sans">OCT</text><text x="8" y="18.500" fontSize="11.500" fill="#333" fontFamily="Liberation Sans">2</text>
        </Ico>
        <Ico>
          <g transform="rotate(-6 11.500 12)"><rect x="3" y="1.500" width="17" height="21" rx="1" fill="#f7f6ef" /><path d="M3 1.500h17v4H3z" fill="#f6c623" /></g>
        </Ico>
        <Ico>
          <defs><linearGradient id="music" x2="0" y2="1"><stop stopColor="#f54c80" /><stop offset=".6" stopColor="#b458df" /><stop offset="1" stopColor="#349bec" /></linearGradient></defs>
          <circle cx="11.500" cy="12" r="11" fill="#eceaf1" /><path d="M8.500 16V7l8-2v10" stroke="url(#music)" strokeWidth="1.800" fill="none" /><ellipse cx="7" cy="16.500" rx="2.400" ry="2" fill="#b25be0" /><ellipse cx="15" cy="15" rx="2.400" ry="2" fill="#3d98eb" />
        </Ico>
        <Ico>
          <circle cx="11.500" cy="12" r="11" fill="#1b86ef" /><path d="M12.500 5L6 17M10.500 5L17 17M4.500 14h14" stroke="#fff" strokeWidth="1.900" fill="none" />
        </Ico>
        <Ico>
          <rect x=".5" y="1.500" width="22" height="20.500" fill="#a9adb3" /><circle cx="11.500" cy="11.800" r="9" fill="#3c4046" /><circle cx="11.500" cy="11.800" r="7" fill="none" stroke="#b7babe" strokeWidth="1.600" /><circle cx="11.500" cy="11.800" r="2" fill="none" stroke="#b7babe" strokeWidth="1.300" /><path d="M13.500 11.800h5M10.500 10L8 6M10.500 13.500L8 17.500" stroke="#b7babe" strokeWidth="1.500" />
        </Ico>
        <i className="w-px h-[25px] ml-[5.500px] mr-[5.500px] mt-[1px] bg-[#343740] shrink-0" />
        <Ico>
          <circle cx="11.500" cy="12" r="11" fill="#53575d" /><circle cx="11.500" cy="12" r="5.800" fill="#173f73" stroke="#2399f5" strokeWidth="3.600" /><path d="M6 14a6 6 0 0 0 5 4" stroke="#1668d6" strokeWidth="3.600" fill="none" /><path d="M12 12l9 9" stroke="#3b4048" strokeWidth="4.500" />
        </Ico>
        <Ico dot>
          <rect x=".5" y="1" width="22" height="22" rx="1" fill="#434343" /><path d="M17.500 4L6 7.500v4.500l7 2-7 2V20l11.500-3.500V12l-7-2 7-2z" fill="#ff9c16" />
        </Ico>
        <Ico dot>
          <circle cx="13" cy="12" r="10" fill="#d3482b" /><path d="M13 2A10 10 0 0 1 23 12H13z" fill="#f18b6a" /><path d="M13 12h10A10 10 0 0 1 7 20.300z" fill="#bd3b22" /><rect x="0" y="6" width="12" height="12" rx="1" fill="#c2391f" /><text x="3" y="15.200" fontSize="9" fontWeight="bold" fill="#fff" fontFamily="Liberation Sans">P</text>
        </Ico>
        <i className="w-px h-[25px] ml-[5.500px] mr-[5.500px] mt-[1px] bg-[#343740] shrink-0" />
        <Ico>
          <path d="M2.500 2.500h18l-3 20h-12z" fill="#50555d" /><ellipse cx="11.500" cy="2.800" rx="9" ry="1.500" fill="#757b83" /><path d="M7 6l1.500 15M16 6l-1.500 15M11.500 6v15" stroke="#62676f" strokeWidth=".8" />
        </Ico>
      </div>
    </div>
  );
}

function Video() {
  return (
    <div className="h-[632px] shrink-0 bg-black pl-[177px] flex overflow-hidden">
      <div className="w-[1011px] flex flex-col font-['Inter',sans-serif]">
        <MacMenuBar />
        <div className="shrink-0 bg-linear-to-b from-[#454545] to-[#373737]">
          <WindowTitle />
          <Tabs />
        </div>
        <Ribbon />
        <div className="h-[507px] shrink-0 flex">
          <Thumbs />
          <div className="flex-1 flex flex-col bg-[#222]">
            <div className="h-[477px] pl-[78px] pt-[12px] border-b border-[#121212] shrink-0"><Slide /></div>
            <div className="pl-[4px] pt-[5px] text-[7.100px] leading-[10px] text-[#ececec] font-medium">Click to add notes</div>
          </div>
        </div>
        <StatusBar />
        <Dock />
      </div>
    </div>
  );
}

/* ---------- player controls ---------- */

function Btn({ children, className = "" }: Kids & { className?: string }) {
  return (
    <div className={`w-[26px] h-[26px] rounded-[3px] border border-[#b5b5b5] bg-linear-to-b from-[#fefefe] to-[#ededed] flex items-center justify-center shrink-0 ${className}`}>
      <svg className="w-[16px] h-[16px]" viewBox="0 0 16 16" fill="#6d6d6d">{children}</svg>
    </div>
  );
}

function Controls() {
  return (
    <div className="h-[52px] shrink-0 bg-[#efefef] flex flex-col text-[#0c0c0c]">
      <div className="h-[18px] flex items-center text-[13.200px] leading-[18px]">
        <Slot w="w-[60px] pl-[9px]">00:00</Slot>
        <div className="w-[1247px] h-[9px] -mt-[1px] rounded-r-[3px] border-l border-[#3b78b5] bg-linear-to-b from-[#b6b6b6] to-[#d6d6d6] shrink-0" />
        <Slot w="w-[59px] pl-[17px]">09:07</Slot>
      </div>
      <div className="h-[34px] flex items-center">
        <div className="w-[32px] h-[32px] ml-[3px] rounded-[3px] border border-[#b5b5b5] bg-linear-to-b from-[#fefefe] to-[#ededed] flex items-center justify-center shrink-0">
          <svg className="w-[14px] h-[17px]" viewBox="0 0 14 17"><path d="M0 .500L14 8.500 0 16.500z" fill="#6d6d6d" /></svg>
        </div>
        <Btn className="ml-[12px]"><path d="M.5 3h2v10h-2zM9 3v10L3 8zM15.500 3v10L9.500 8z" /></Btn>
        <Btn><path d="M3 3h10v10H3z" /></Btn>
        <Btn><path d="M13.500 3h2v10h-2zM7 3v10l6-5zM.5 3v10l6-5z" /></Btn>
        <Btn className="ml-[12px]"><path d="M0 1.500h5v2H2v3H0zM11 1.500h5v5h-2v-3h-3zM0 9.500h2v3h3v2H0zM14 9.500h2v5h-5v-2h3z" /></Btn>
        <Btn><path d="M2 1.500h2V9h1.500v2H4v3.500H2V11H.5V9H2zM7 1.500h2V4h1.500v2H9v8.500H7V6H5.500V4H7zM12 1.500h2V6h1.500v2H14v6.500h-2V8h-1.500V6H12z" /></Btn>
        <Btn className="ml-[12px]"><path d="M1 1.500h14v2H1zM1 5.500h14v2H1zM1 9.500h9v2H1zM1 13h9v2H1zM11.500 8.500l4 3.200-4 3.300z" /></Btn>
        <Btn><path d="M1 7V4q0-1.500 1.500-1.500H11V.5l4 3-4 3v-2H3V7zM15 9v3q0 1.500-1.500 1.500H5v2l-4-3 4-3v2h8V9z" /></Btn>
        <Btn><path d="M1 3.300L2.400 2l4 4L5 7.400zM9 10l1.500-1.500 2 2L14.500 9v5.500H9l2-2zM1 13L11 4 9 1.500h5.500V7l-2-1.500-10 9z" /></Btn>
        <svg className="w-[16px] h-[16px] ml-[987px] mt-[15px] shrink-0" viewBox="0 0 16 16" fill="none">
          <path d="M0 5h2.500L6 2v12L2.500 11H0z" fill="#7a7a7a" /><path d="M7.500 5.500q2 2.500 0 5M9.300 3.700q3.200 4.300 0 8.600M11 2.200q4 5.800 0 11.600" stroke="#f0952b" strokeWidth="1.300" />
        </svg>
        <div className="relative w-[74px] h-[24px] ml-[5px] mt-[6px] shrink-0">
          <svg className="w-[74px] h-[24px]" viewBox="0 0 74 24">
            <defs><linearGradient id="vol"><stop stopColor="#b2dfae" /><stop offset=".3" stopColor="#70d06c" /><stop offset=".73" stopColor="#19d317" /><stop offset=".78" stopColor="#83ca1e" /><stop offset=".86" stopColor="#ffb71b" /><stop offset=".94" stopColor="#f95d20" /><stop offset="1" stopColor="#ee2f20" /></linearGradient></defs>
            <path d="M1 20.500L72.500 1.500V22H1.500z" fill="url(#vol)" stroke="#777" strokeWidth="1.500" strokeLinejoin="round" />
          </svg>
          <span className="absolute left-[2px] top-[0.500px] text-[9.800px] leading-[12px] text-[#808080]">125%</span>
        </div>
      </div>
    </div>
  );
}

export default function App() {
  return (
    <div className="w-[1366px] h-[768px] flex flex-col overflow-hidden bg-black font-['Noto_Sans',sans-serif]">
      <GnomeBar />
      <TitleBar />
      <VlcMenu />
      <Video />
      <Controls />
    </div>
  );
}
